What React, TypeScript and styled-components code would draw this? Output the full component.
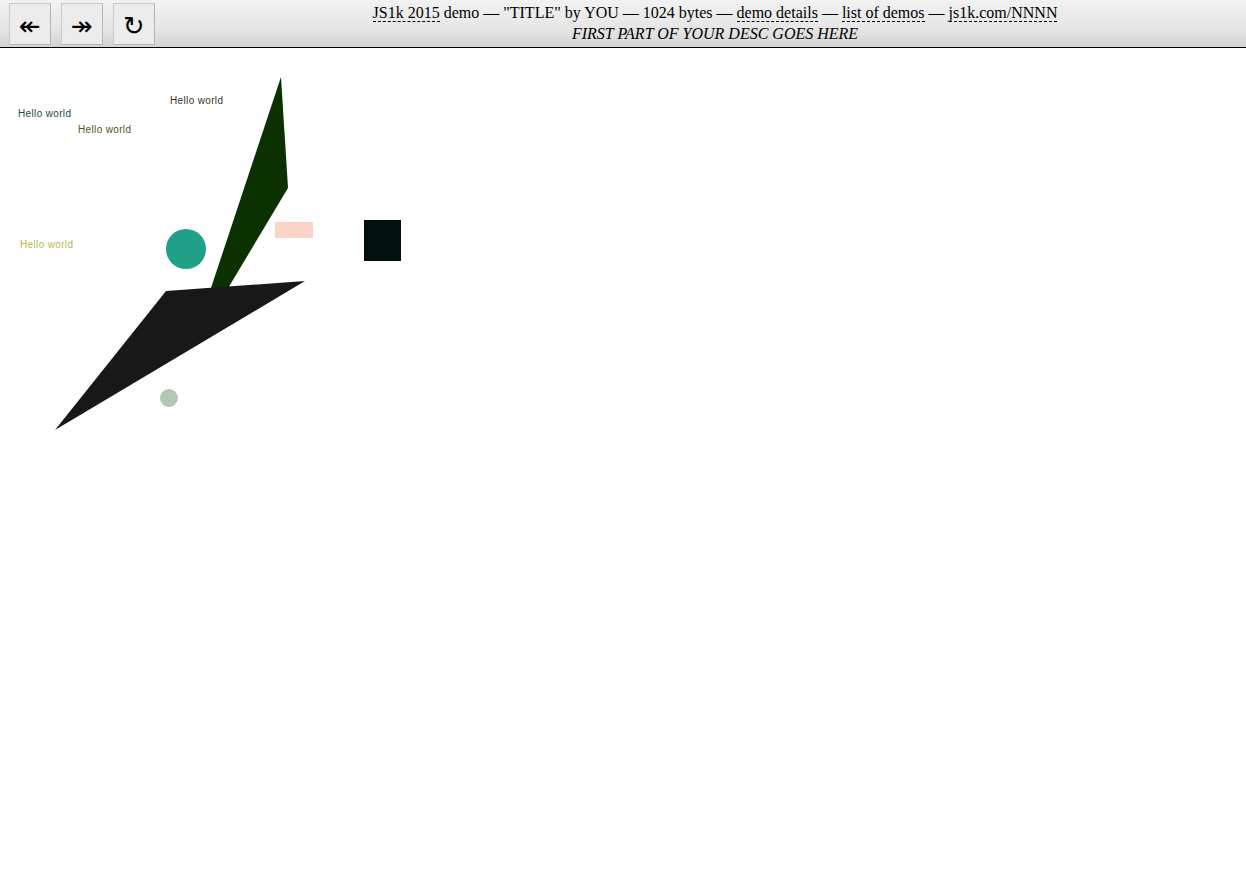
import React from "react";
import styled, { createGlobalStyle } from "styled-components";

const GlobalStyle = createGlobalStyle`
  html, body { margin: 0; padding: 0; background: #fff; }
  body { font-family: "Liberation Serif", "Times New Roman", serif; color: #000; }
`;

const Header = styled.header`
  display: flex;
  align-items: flex-start;
  height: 47px;
  padding: 0 0 0 9px;
  border-bottom: 1px solid #000;
  background: linear-gradient(to bottom, #f2f2f2 0%, #e6e6e6 60%, #d4d4d4 100%);
  box-sizing: content-box;
`;

const ButtonGroup = styled.div`
  display: flex;
  gap: 10px;
  margin-top: 3px;
`;

const NavButton = styled.button<{ $size?: number; $shift?: number }>`
  width: 42px;
  height: 42px;
  padding: ${(p) => p.$shift ?? 3}px 0 0 0;
  margin: 0;
  display: flex;
  align-items: center;
  justify-content: center;
  border: 1px solid #c9c9c9;
  border-right-color: #b5b5b5;
  border-bottom-color: #b5b5b5;
  background: #ececec;
  font-family: "DejaVu Sans", sans-serif;
  font-weight: normal;
  font-size: ${(p) => p.$size ?? 26}px;
  line-height: 1;
  color: #000;
  cursor: pointer;
  box-sizing: border-box;
`;

const Info = styled.div`
  flex: 1;
  padding: 2px 0 0 29px;
  text-align: center;
  font-size: 16px;
  line-height: 21px;
`;

const Line = styled.div`
  white-space: nowrap;
`;

const Desc = styled.div`
  font-style: italic;
  white-space: nowrap;
`;

const Link = styled.a`
  color: #000;
  text-decoration: none;
  border-bottom: 1px dashed #000;
`;

const Stage = styled.svg`
  display: block;
`;

export default function App() {
  return (
    <>
      <GlobalStyle />
      <Header>
        <ButtonGroup>
          <NavButton title="previous">↞</NavButton>
          <NavButton title="next">↠</NavButton>
          <NavButton title="reload" $size={26} $shift={4}>↻</NavButton>
        </ButtonGroup>
        <Info>
          <Line>
            <Link href="#">JS1k 2015</Link> demo — "TITLE" by YOU — 1024 bytes —{" "}
            <Link href="#">demo details</Link> — <Link href="#">list of demos</Link> —{" "}
            <Link href="#">js1k.com/NNNN</Link>
          </Line>
          <Desc>FIRST PART OF YOUR DESC GOES HERE</Desc>
        </Info>
      </Header>
      <Stage width={1246} height={840} viewBox="0 0 1246 840">
        <g fontFamily="'Liberation Sans', Arial, sans-serif" fontSize={10} letterSpacing={0.35}>
          <text x={18} y={68.5} fill="#1a4848">Hello world</text>
          <text x={170} y={56} fill="#3a3222">Hello world</text>
          <text x={78} y={84.5} fill="#575024">Hello world</text>
          <text x={20} y={200} fill="#b8b84a">Hello world</text>
        </g>
        <polygon points="281,29 288,140 221,252 207,252" fill="#0b3100" />
        <circle cx={186} cy={201} r={20} fill="#21a088" />
        <rect x={275} y={174} width={38} height={16} fill="#f9d4c7" />
        <rect x={364} y={172} width={37} height={41} fill="#020f0f" />
        <polygon points="166,243 305,233 55,382" fill="#181818" />
        <circle cx={169} cy={350} r={9} fill="#b3c8b3" />
      </Stage>
    </>
  );
}
